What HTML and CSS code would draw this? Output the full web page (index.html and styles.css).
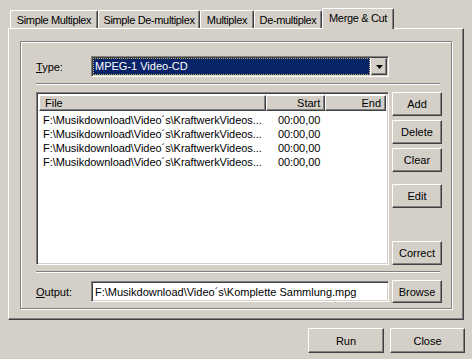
FILE: index.html
```html
<!DOCTYPE html>
<html>
<head>
<meta charset="utf-8">
<link rel="stylesheet" href="styles.css">
</head>
<body>
<div class="tabs">
  <div class="tab t1">Simple Multiplex</div>
  <div class="tab t2">Simple De-multiplex</div>
  <div class="tab t3">Multiplex</div>
  <div class="tab t4">De-multiplex</div>
  <div class="tab active">Merge &amp; Cut</div>
</div>
<div class="panel">
  <div class="group">
    <div class="row type-row">
      <span class="lbl"><u>T</u>ype:</span>
      <div class="sunken combo">
        <span class="combo-sel">MPEG-1 Video-CD</span>
        <span class="raised combo-btn"><svg width="7" height="4" viewBox="0 0 7 4"><path d="M0 0H7L3.5 4Z" fill="#000"/></svg></span>
      </div>
    </div>
    <div class="sep sep1"></div>
    <div class="list-area">
      <div class="sunken listview">
        <div class="lv-head">
          <div class="raised hcell c-file">File</div>
          <div class="raised hcell c-start">Start</div>
          <div class="raised hcell c-end">End</div>
        </div>
        <div class="lv-body">
          <div class="lv-row"><span class="cell c-file">F:\Musikdownload\Video´s\KraftwerkVideos...</span><span class="cell c-start">00:00,00</span><span class="cell c-end"></span></div>
          <div class="lv-row"><span class="cell c-file">F:\Musikdownload\Video´s\KraftwerkVideos...</span><span class="cell c-start">00:00,00</span><span class="cell c-end"></span></div>
          <div class="lv-row"><span class="cell c-file">F:\Musikdownload\Video´s\KraftwerkVideos...</span><span class="cell c-start">00:00,00</span><span class="cell c-end"></span></div>
          <div class="lv-row"><span class="cell c-file">F:\Musikdownload\Video´s\KraftwerkVideos...</span><span class="cell c-start">00:00,00</span><span class="cell c-end"></span></div>
        </div>
      </div>
      <div class="side-btns">
        <button class="raised btn side">Add</button>
        <button class="raised btn side">Delete</button>
        <button class="raised btn side">Clear</button>
        <button class="raised btn side edit">Edit</button>
        <button class="raised btn side correct">Correct</button>
      </div>
    </div>
    <div class="sep sep2"></div>
    <div class="row out-row">
      <span class="lbl"><u>O</u>utput:</span>
      <div class="sunken textbox">F:\Musikdownload\Video´s\Komplette Sammlung.mpg</div>
      <button class="raised btn browse">Browse</button>
    </div>
  </div>
</div>
<div class="footer">
  <button class="raised btn run">Run</button>
  <button class="raised btn close">Close</button>
</div>
</body>
</html>
```
FILE: styles.css
```css
* { box-sizing: border-box; }
html, body { margin: 0; padding: 0; }
body {
  background: #d4d0c8;
  width: 472px;
  height: 359px;
  overflow: hidden;
  font-family: "Liberation Sans", Arial, sans-serif;
  font-size: 11px;
  color: #000;
}
.raised {
  background: #d4d0c8;
  border: 1px solid;
  border-color: #fff #404040 #404040 #fff;
  box-shadow: inset -1px -1px #808080;
}
.sunken {
  background: #fff;
  border: 1px solid;
  border-color: #808080 #fff #fff #808080;
  box-shadow: inset 1px 1px #404040, inset -1px -1px #d4d0c8;
  padding: 1px;
}
.btn {
  font: inherit;
  color: #000;
  padding: 0;
  margin: 0;
  display: flex;
  align-items: center;
  justify-content: center;
}
.tabs {
  display: flex;
  align-items: flex-end;
  height: 20px;
  margin-top: 8px;
  padding-left: 10px;
}
.tab {
  height: 18px;
  border-top: 1px solid #fff;
  border-left: 1px solid #fff;
  border-right: 1px solid #404040;
  box-shadow: inset -1px 0 #808080;
  display: flex;
  align-items: center;
  justify-content: center;
  padding-top: 1px;
  white-space: nowrap;
  border-radius: 2px 2px 0 0;
  letter-spacing: -0.35px;
}
.t1 { width: 88px; }
.t2 { width: 102px; }
.t3 { width: 54px; }
.t4 { width: 68px; }
.tab.active {
  width: 72px;
  height: 21px;
  margin-bottom: -1px;
  position: relative;
  z-index: 1;
  background: #d4d0c8;
  padding-top: 0;
  padding-bottom: 3px;
}
.panel {
  margin-left: 8px;
  width: 456px;
  height: 292px;
  border: 1px solid;
  border-color: #fff #404040 #404040 #fff;
  box-shadow: inset -1px -1px #808080;
  padding: 12px 0 0 11px;
}
.group {
  width: 432px;
  height: 268px;
  border: 1px solid #808080;
  box-shadow: inset 1px 1px #fff, 1px 1px #fff;
  padding: 14px 0 0 15px;
  display: flex;
  flex-direction: column;
}
.row { display: flex; align-items: center; }
.lbl { width: 55px; }
.type-row { height: 21px; }
.combo {
  width: 298px;
  height: 21px;
  display: flex;
}
.combo-sel {
  flex: 1;
  background: #0a246a;
  color: #fff;
  border: 1px dotted #c8b060;
  padding-left: 1px;
  margin-right: 1px;
  display: flex;
  align-items: center;
  line-height: 13px;
}
.combo-btn {
  width: 16px;
  height: 17px;
  display: flex;
  align-items: center;
  justify-content: center;
  box-shadow: inset -1px -1px #808080, inset 1px 1px #d4d0c8;
  border-color: #d4d0c8 #404040 #404040 #d4d0c8;
}
.combo-btn svg { display: block; }
.sep {
  width: 404px;
  height: 2px;
  border-top: 1px solid #808080;
  border-bottom: 1px solid #fff;
}
.sep1 { margin-top: 6px; }
.sep2 { margin-top: 6px; }
.list-area {
  display: flex;
  margin-top: 7px;
  height: 173px;
}
.listview {
  width: 353px;
  height: 173px;
  padding: 2px;
}
.lv-head { display: flex; height: 16px; }
.hcell {
  height: 16px;
  display: flex;
  align-items: center;
  padding: 0 4px;
  white-space: nowrap;
}
.hcell.c-file { padding-left: 5px; }
.c-file { width: 228px; }
.c-start { width: 60px; justify-content: flex-end; text-align: right; }
.c-end { width: 61px; justify-content: flex-end; text-align: right; }
.lv-body { padding-top: 2px; }
.lv-row { display: flex; height: 14px; line-height: 14px; }
.cell { white-space: nowrap; overflow: hidden; padding: 0 4px; display: block; letter-spacing: -0.05px; }
.cell.c-start { padding-right: 5px; }
.side-btns {
  margin-left: 3px;
  width: 50px;
  display: flex;
  flex-direction: column;
}
.side { width: 50px; height: 24px; margin-bottom: 4px; }
.side.edit { margin-top: 8px; }
.side.correct { margin-top: auto; margin-bottom: 0; }
.out-row { margin-top: 7px; height: 23px; }
.textbox {
  width: 298px;
  height: 21px;
  display: flex;
  align-items: center;
  padding-left: 3px;
  white-space: nowrap;
}
.browse { margin-left: 3px; width: 50px; height: 23px; }
.footer {
  display: flex;
  justify-content: flex-end;
  gap: 6px;
  margin-top: 8px;
  padding-right: 7px;
}
.run { width: 76px; height: 25px; }
.close { width: 75px; height: 25px; }
```
